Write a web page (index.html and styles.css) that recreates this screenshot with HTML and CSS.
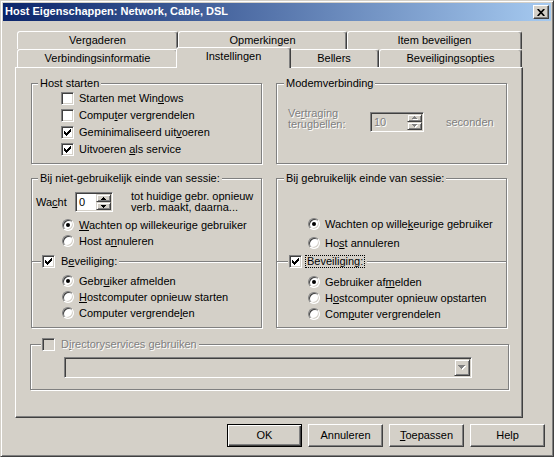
FILE: index.html
```html
<!DOCTYPE html>
<html lang="nl">
<head>
<meta charset="utf-8">
<title>Host Eigenschappen</title>
<link rel="stylesheet" href="styles.css">
</head>
<body>
<div class="window">
  <div class="titlebar">
    <span class="title">Host Eigenschappen: Network, Cable, DSL</span>
    <span class="close"><svg width="8" height="7" viewBox="0 0 8 7"><path d="M0.7 0 L7.3 7 M7.3 0 L0.7 7" stroke="#000" stroke-width="1.7" fill="none"/></svg></span>
  </div>

  <div class="tabs">
    <div class="tabrow">
      <div class="tab t161">Vergaderen</div>
      <div class="tab t169">Opmerkingen</div>
      <div class="tab t175">Item beveiligen</div>
    </div>
    <div class="tabrow">
      <div class="tab t161">Verbindingsinformatie</div>
      <div class="tab sel">Instellingen</div>
      <div class="tab t90">Bellers</div>
      <div class="tab t143">Beveiligingsopties</div>
    </div>
  </div>

  <div class="panel">
    <div class="grid">
      <div class="group">
        <span class="glabel">Host starten</span>
        <div class="checks">
          <div class="row"><span class="cb"></span><span>Starten met Win<u>d</u>ows</span></div>
          <div class="row"><span class="cb"></span><span>Compu<u>t</u>er vergrendelen</span></div>
          <div class="row"><span class="cb"><svg width="7" height="7" viewBox="0 0 7 7" shape-rendering="crispEdges"><path d="M0 2h1v1h1v1h1v-1h1v-1h1v-1h1v-1h1v3h-1v1h-1v1h-1v1h-1v1h-1v-1h-1v-1h-1z"/></svg></span><span>Geminimaliseerd uit<u>v</u>oeren</span></div>
          <div class="row"><span class="cb"><svg width="7" height="7" viewBox="0 0 7 7" shape-rendering="crispEdges"><path d="M0 2h1v1h1v1h1v-1h1v-1h1v-1h1v-1h1v3h-1v1h-1v1h-1v1h-1v1h-1v-1h-1v-1h-1z"/></svg></span><span>Uitvoeren <u>a</u>ls service</span></div>
        </div>
      </div>

      <div class="group rg">
        <span class="glabel">Modemverbinding</span>
        <div class="modem">
          <span class="mlabel dis">Ve<u>r</u>traging<br>terugbellen:</span>
          <span class="spin sp-dis">
            <span class="val dis">10</span>
            <span class="sbtns">
              <span class="sb"><svg width="6" height="4" viewBox="0 0 6 4" shape-rendering="crispEdges"><path fill="#fff" d="M3 1h1v1h1v1h1v1h-5v-1h1v-1h1z"/><path fill="#808080" d="M2 0h1v1h1v1h1v1h-5v-1h1v-1h1z"/></svg></span>
              <span class="sb"><svg width="6" height="4" viewBox="0 0 6 4" shape-rendering="crispEdges"><path fill="#fff" d="M1 1h5v1h-1v1h-1v1h-1v-1h-1v-1h-1z"/><path fill="#808080" d="M0 0h5v1h-1v1h-1v1h-1v-1h-1v-1h-1z"/></svg></span>
            </span>
          </span>
          <span class="sec dis">seconden</span>
        </div>
      </div>

      <div class="group g2">
        <span class="glabel">Bij niet-gebruikelijk einde van sessie:</span>
        <div class="wacht">
          <span class="wlabel">Wa<u>c</u>ht</span>
          <span class="spin sp-en">
            <span class="val">0</span>
            <span class="sbtns">
              <span class="sb"><svg width="5" height="3" viewBox="0 0 5 3" shape-rendering="crispEdges"><path d="M2 0h1v1h1v1h1v1h-5v-1h1v-1h1z"/></svg></span>
              <span class="sb"><svg width="5" height="3" viewBox="0 0 5 3" shape-rendering="crispEdges"><path d="M0 0h5v1h-1v1h-1v1h-1v-1h-1v-1h-1z"/></svg></span>
            </span>
          </span>
          <span class="wtext">tot huidige gebr. opnieuw<br>verb. maakt, daarna...</span>
        </div>
        <div class="opts top">
          <div class="row r16"><span class="rd on"></span><span><u>W</u>achten op willekeurige gebruiker</span></div>
          <div class="row r16"><span class="rd"></span><span>Host a<u>n</u>nuleren</span></div>
        </div>
        <div class="sub">
          <span class="slabel"><span class="cb"><svg width="7" height="7" viewBox="0 0 7 7" shape-rendering="crispEdges"><path d="M0 2h1v1h1v1h1v-1h1v-1h1v-1h1v-1h1v3h-1v1h-1v1h-1v1h-1v1h-1v-1h-1v-1h-1z"/></svg></span><span>B<u>e</u>veiliging:</span></span>
          <div class="opts">
            <div class="row r16"><span class="rd on"></span><span>Gebr<u>u</u>iker afmelden</span></div>
            <div class="row r16"><span class="rd"></span><span><u>H</u>ostcomputer opnieuw starten</span></div>
            <div class="row r16"><span class="rd"></span><span>Computer vergrende<u>l</u>en</span></div>
          </div>
        </div>
      </div>

      <div class="group rg">
        <span class="glabel">Bij gebruikelijk einde van sessie:</span>
        <div class="opts top">
          <div class="row r16"><span class="rd on"></span><span>Wachten op wille<u>k</u>eurige gebruiker</span></div>
          <div class="row r16"><span class="rd"></span><span>Ho<u>s</u>t annuleren</span></div>
        </div>
        <div class="sub">
          <span class="slabel"><span class="cb"><svg width="7" height="7" viewBox="0 0 7 7" shape-rendering="crispEdges"><path d="M0 2h1v1h1v1h1v-1h1v-1h1v-1h1v-1h1v3h-1v1h-1v1h-1v1h-1v1h-1v-1h-1v-1h-1z"/></svg></span><span class="focus">Beveiliging:</span></span>
          <div class="opts">
            <div class="row r16"><span class="rd on"></span><span>Gebruiker af<u>m</u>elden</span></div>
            <div class="row r16"><span class="rd"></span><span>H<u>o</u>stcomputer opnieuw opstarten</span></div>
            <div class="row r16"><span class="rd"></span><span>Com<u>p</u>uter vergrendelen</span></div>
          </div>
        </div>
      </div>
    </div>

    <div class="group dir">
      <span class="slabel"><span class="cb off"></span><span class="dis">D<u>i</u>rectoryservices gebruiken</span></span>
      <div class="combo">
        <span class="cbtn"><svg width="8" height="5" viewBox="0 0 8 5" shape-rendering="crispEdges"><path fill="#fff" d="M1 1h7v1h-1v1h-1v1h-1v1h-1v-1h-1v-1h-1v-1h-1z"/><path fill="#808080" d="M0 0h7v1h-1v1h-1v1h-1v1h-1v-1h-1v-1h-1v-1h-1z"/></svg></span>
      </div>
    </div>
  </div>

  <div class="buttons">
    <div class="btn def">OK</div>
    <div class="btn">Annuleren</div>
    <div class="btn"><span><u>T</u>oepassen</span></div>
    <div class="btn">Help</div>
  </div>
</div>
</body>
</html>
```

FILE: styles.css
```css
* { box-sizing: border-box; }
html, body { margin: 0; padding: 0; }
body {
  background: #d4d0c8;
  font-family: "Liberation Sans", Arial, sans-serif;
  font-size: 11px;
  line-height: 13px;
  color: #000;
}
u { text-decoration: underline; text-underline-offset: 1px; }

.window {
  width: 554px;
  height: 457px;
  display: flex;
  flex-direction: column;
  background: #d4d0c8;
  border: 1px solid;
  border-color: #d4d0c8 #404040 #404040 #d4d0c8;
  box-shadow: inset 1px 1px 0 #fff, inset -1px -1px 0 #808080;
  padding: 2px;
}

.titlebar {
  flex: none;
  height: 18px;
  display: flex;
  align-items: center;
  padding-left: 2px;
  background: linear-gradient(to right, #0a246a, #a6caf0);
  color: #fff;
  font-weight: bold;
}
.title { margin-top: -1px; white-space: nowrap; }
.close {
  margin-left: auto;
  margin-right: 2px;
  width: 16px;
  height: 14px;
  display: flex;
  align-items: center;
  justify-content: center;
  background: #d4d0c8;
  border: 1px solid;
  border-color: #fff #404040 #404040 #fff;
  box-shadow: inset -1px -1px 0 #808080;
}

.tabs { flex: none; margin: 10px 0 0 14px; }
.tabrow { display: flex; height: 18px; }
.tab {
  flex: none;
  height: 18px;
  display: flex;
  align-items: center;
  justify-content: center;
  white-space: nowrap;
  border: 1px solid;
  border-bottom: 0;
  border-color: #fff #404040 transparent #fff;
  border-radius: 3px 3px 0 0;
  box-shadow: inset -1px 0 0 #808080;
  background: #d4d0c8;
  padding-bottom: 1px;
}
.t161 { width: 161px; }
.t169 { width: 169px; }
.t175 { width: 175px; }
.t90 { width: 90px; }
.t143 { width: 143px; }
.tab.sel {
  width: 115px;
  height: 21px;
  margin: -2px -2px -1px;
  position: relative;
  z-index: 1;
  padding-bottom: 3px;
}

.panel {
  flex: none;
  margin-left: 12px;
  width: 508px;
  height: 351px;
  border: 1px solid;
  border-color: #fff #404040 #404040 #fff;
  box-shadow: inset -1px -1px 0 #808080;
  padding: 15px 0 0 15px;
}
.grid {
  display: grid;
  grid-template-columns: 231px 231px;
  grid-template-rows: 81px 150px;
  gap: 14px;
}
.group {
  position: relative;
  border: 1px solid #808080;
  box-shadow: inset 1px 1px 0 #fff, 1px 1px 0 #fff;
}
.glabel {
  position: absolute;
  top: -7px;
  left: 6px;
  padding: 0 2px;
  background: #d4d0c8;
  white-space: nowrap;
}
.rg .glabel { left: 7px; }

.checks { padding: 6px 0 0 29px; }
.row { display: flex; align-items: center; gap: 5px; height: 17px; white-space: nowrap; }
.r16 { height: 16px; }

.cb {
  flex: none;
  width: 13px;
  height: 13px;
  display: flex;
  align-items: center;
  justify-content: center;
  background: #fff;
  border: 1px solid;
  border-color: #808080 #fff #fff #808080;
  box-shadow: inset 1px 1px 0 #404040, inset -1px -1px 0 #d4d0c8;
}
.cb.off { background: #d4d0c8; }
.rd {
  flex: none;
  width: 12px;
  height: 12px;
  border-radius: 50%;
  background: #fff;
  border: 1px solid;
  border-color: #808080 #fff #fff #808080;
  box-shadow: inset 1px 1px 0 #404040, inset -1px -1px 0 #d4d0c8;
  display: flex;
  align-items: center;
  justify-content: center;
}
.rd.on::after {
  content: "";
  width: 4px;
  height: 4px;
  border-radius: 50%;
  background: #000;
}
.dis { color: #808080; text-shadow: 1px 1px 0 #fff; }

.modem { display: flex; align-items: center; height: 22px; margin-top: 27px; padding-left: 11px; }
.mlabel { flex: none; width: 82px; line-height: 11px; margin-bottom: 6px; }
.spin {
  flex: none;
  display: flex;
  align-items: stretch;
  height: 20px;
  border: 1px solid;
  border-color: #808080 #fff #fff #808080;
  box-shadow: inset 1px 1px 0 #404040, inset -1px -1px 0 #d4d0c8;
  padding: 1px;
  background: #fff;
}
.sp-dis { width: 54px; background: #d4d0c8; }
.sp-en { width: 38px; }
.val { flex: 1; padding-left: 2px; line-height: 16px; }
.sbtns { flex: none; width: 15px; display: flex; flex-direction: column; }
.sb {
  flex: 1;
  display: flex;
  align-items: center;
  justify-content: center;
  background: #d4d0c8;
  border: 1px solid;
  border-color: #d4d0c8 #404040 #404040 #d4d0c8;
  box-shadow: inset 1px 1px 0 #fff, inset -1px -1px 0 #808080;
}
.sec { margin-left: 22px; }

.wacht { display: flex; align-items: flex-start; margin-top: 13px; padding-left: 4px; }
.wlabel { flex: none; width: 39px; line-height: 20px; }
.wtext { margin-left: 18px; line-height: 11px; margin-top: -1px; white-space: nowrap; }

.opts { display: flex; flex-direction: column; padding-left: 30px; }
.g2 .top { margin-top: 4px; }
.sub { position: relative; border-top: 1px solid #808080; box-shadow: inset 0 1px 0 #fff; }
.g2 .sub { margin-top: 12px; padding-top: 11px; }
.slabel {
  position: absolute;
  top: -7px;
  left: 9px;
  height: 13px;
  display: flex;
  align-items: center;
  gap: 6px;
  padding: 0 2px 0 1px;
  background: #d4d0c8;
  white-space: nowrap;
}
.rg .top { margin-top: 37px; padding-left: 31px; }
.rg .top .row + .row { margin-top: 3px; }
.rg .sub { margin-top: 10px; padding-top: 12px; }
.rg .sub .opts { padding-left: 31px; }
.rg .slabel { left: 11px; }
.focus { border: 1px dotted #000; padding: 0 1px; margin-left: -3px; line-height: 11px; }

.dir { margin: 16px 0 0 -1px; width: 479px; height: 46px; }
.dir .slabel { left: 10px; }
.combo {
  margin: 12px 0 0 33px;
  width: 408px;
  height: 21px;
  display: flex;
  justify-content: flex-end;
  border: 1px solid;
  border-color: #808080 #fff #fff #808080;
  box-shadow: inset 1px 1px 0 #404040, inset -1px -1px 0 #d4d0c8;
  padding: 1px;
  background: #d4d0c8;
}
.cbtn {
  width: 16px;
  display: flex;
  align-items: center;
  justify-content: center;
  background: #d4d0c8;
  border: 1px solid;
  border-color: #d4d0c8 #404040 #404040 #d4d0c8;
  box-shadow: inset 1px 1px 0 #fff, inset -1px -1px 0 #808080;
}

.buttons { flex: none; display: flex; justify-content: flex-end; gap: 6px; margin-top: 6px; padding-right: 6px; }
.btn {
  width: 75px;
  height: 23px;
  display: flex;
  align-items: center;
  justify-content: center;
  border: 1px solid;
  border-color: #fff #404040 #404040 #fff;
  box-shadow: inset -1px -1px 0 #808080;
}
.btn.def {
  border-color: #000;
  box-shadow: inset 1px 1px 0 #fff, inset -1px -1px 0 #404040, inset -2px -2px 0 #808080;
}
```
